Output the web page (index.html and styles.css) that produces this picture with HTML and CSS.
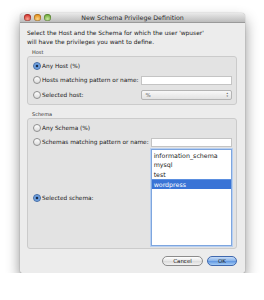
FILE: index.html
```html
<!DOCTYPE html>
<html lang="en">
<head>
    <meta charset="UTF-8">
    <meta name="viewport" content="width=device-width, initial-scale=1.0">
    <title>New Schema Privilege Definition</title>
    <link rel="stylesheet" href="styles.css">
</head>
<body>
    <div class="window">
        <div class="titlebar">
            <div class="lights">
                <span class="light red"></span>
                <span class="light orange"></span>
                <span class="light green"></span>
            </div>
            <div class="title">New Schema Privilege Definition</div>
        </div>
        <div class="content">
            <p class="intro">Select the Host and the Schema for which the user 'wpuser'<br>will have the privileges you want to define.</p>

            <div class="group-label">Host</div>
            <div class="group host-group">
                <label class="opt"><span class="radio checked"></span>Any Host (%)</label>
                <span></span>
                <label class="opt"><span class="radio"></span>Hosts matching pattern or name:</label>
                <input class="field" type="text">
                <label class="opt"><span class="radio"></span>Selected host:</label>
                <div class="popup"><span>%</span><span class="arrows">&#9652;<br>&#9662;</span></div>
            </div>

            <div class="group-label">Schema</div>
            <div class="group schema-group">
                <label class="opt"><span class="radio"></span>Any Schema (%)</label>
                <span></span>
                <label class="opt"><span class="radio"></span>Schemas matching pattern or name:</label>
                <input class="field" type="text">
                <label class="opt"><span class="radio checked"></span>Selected schema:</label>
                <div class="list">
                    <div class="item">information_schema</div>
                    <div class="item">mysql</div>
                    <div class="item">test</div>
                    <div class="item selected">wordpress</div>
                </div>
            </div>

            <div class="buttons">
                <button class="btn">Cancel</button>
                <button class="btn default">OK</button>
            </div>
        </div>
    </div>
</body>
</html>
```

FILE: styles.css
```css
body {
    margin: 0;
    background: #ffffff;
    font-family: "DejaVu Sans", Verdana, sans-serif;
    color: #1a1a1a;
}
.window {
    width: 225px;
    margin: 13px 0 0 20px;
    background: #ececec;
    border-radius: 4px 4px 2px 2px;
    box-shadow: 0 7px 14px rgba(0, 0, 0, 0.45), 0 0 1px rgba(0, 0, 0, 0.5);
    overflow: hidden;
}
.titlebar {
    height: 9px;
    position: relative;
    background: linear-gradient(#e9e9e9, #bcbcbc);
    border-bottom: 1px solid #9a9a9a;
    display: flex;
    align-items: center;
    justify-content: center;
}
.lights {
    position: absolute;
    left: 4px;
    top: 1px;
    display: flex;
    gap: 3px;
}
.light {
    width: 7px;
    height: 7px;
    border-radius: 50%;
    box-shadow: inset 0 0 0 0.5px rgba(0, 0, 0, 0.35);
}
.red { background: radial-gradient(circle at 50% 70%, #f9a493, #d1302a 70%); }
.orange { background: radial-gradient(circle at 50% 70%, #fbd58a, #e08b16 70%); }
.green { background: radial-gradient(circle at 50% 70%, #c9e7a0, #6aa735 70%); }
.title {
    font-size: 6.3px;
    color: #2b2b2b;
}
.content {
    padding: 6px 8px 7px 7px;
}
.intro {
    margin: 0 0 1px 0;
    font-size: 5.9px;
    line-height: 9px;
}
.group-label {
    font-size: 5px;
    line-height: 8px;
    margin-left: 5px;
    color: #333;
}
.group {
    background: #e3e3e3;
    border: 1px solid #cbcbcb;
    border-radius: 3px;
    padding: 1px 4px 1px 5px;
    display: grid;
    grid-template-columns: auto minmax(0, 1fr);
    align-items: center;
}
.host-group {
    grid-template-rows: 15px 14px 16px;
    margin-bottom: 5px;
}
.schema-group {
    grid-template-rows: 15px 14px 98px;
    margin-bottom: 7px;
}
.opt {
    display: flex;
    align-items: center;
    font-size: 5.8px;
    white-space: nowrap;
    padding-right: 2px;
}
.radio {
    width: 8px;
    height: 8px;
    box-sizing: border-box;
    border-radius: 50%;
    margin-right: 1px;
    border: 1px solid #8f8f8f;
    background: linear-gradient(#ffffff, #dcdcdc);
    flex: none;
}
.radio.checked {
    border-color: #3f6aa7;
    background: radial-gradient(circle, #1c2b45 1.2px, #5d93d8 1.6px, #a9c9ef);
}
.field {
    width: 100%;
    min-width: 0;
    height: 9px;
    box-sizing: border-box;
    border: 1px solid #c4c4c4;
    background: #fff;
    padding: 0;
    margin: 0;
}
.popup {
    height: 10px;
    box-sizing: border-box;
    border: 1px solid #b4b4b4;
    border-radius: 2px;
    background: linear-gradient(#f8f8f8, #e2e2e2);
    display: flex;
    justify-content: space-between;
    align-items: center;
    padding: 0 3px 0 4px;
    font-size: 5.5px;
    color: #666;
}
.arrows {
    font-size: 3px;
    line-height: 3px;
    color: #555;
}
.list {
    align-self: start;
    height: 97px;
    box-sizing: border-box;
    background: #fff;
    border: 1px solid #7ea6df;
    box-shadow: 0 0 0 1px #b9d0f1;
    font-size: 6.3px;
    line-height: 9.3px;
    padding-top: 1px;
}
.item {
    padding-left: 2px;
}
.item.selected {
    background: #3a74d6;
    color: #fff;
    height: 9px;
    line-height: 9px;
    border-top: 1px solid #5b8fe0;
}
.buttons {
    display: flex;
    justify-content: flex-end;
    gap: 4px;
}
.btn {
    font-family: "DejaVu Sans", Verdana, sans-serif;
    font-size: 5.5px;
    height: 10px;
    padding: 0;
    border-radius: 5px;
    border: 1px solid #8c8c8c;
    background: linear-gradient(#ffffff, #e6e6e6 50%, #dadada 51%, #f2f2f2);
    color: #222;
    width: 41px;
}
.btn.default {
    width: 30px;
    border-color: #3f68ae;
    background: linear-gradient(#c7dcf7, #84b1ea 50%, #5e95e1 51%, #a6cdf5);
}
```
